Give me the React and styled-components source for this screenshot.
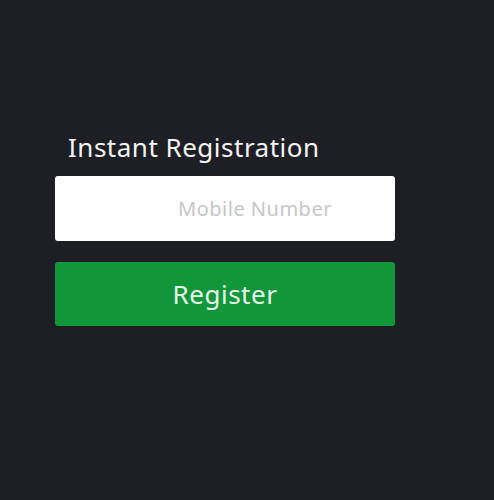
import styled, { createGlobalStyle } from "styled-components";

const Global = createGlobalStyle`
  html, body {
    margin: 0;
    background: #1e1f24;
    font-family: "Noto Sans", Lato, sans-serif;
  }
`;

const App = () => {
  return (
    <Page>
      <Global />
      <Form>
        <Title>Instant Registration</Title>
        <PhoneInput type="tel" placeholder="Mobile Number" />
        <RegisterButton type="button">Register</RegisterButton>
      </Form>
    </Page>
  );
};

export default App;

const Page = styled.div`
  min-height: 500px;
  padding: 128px 0 0 55px;
  box-sizing: border-box;
`;

const Form = styled.div`
  width: 340px;
  display: flex;
  flex-direction: column;
`;

const Title = styled.h2`
  margin: 0 0 10px 13px;
  font-size: 26px;
  font-weight: 400;
  letter-spacing: 0.5px;
  line-height: 38px;
  color: #f4f4f4;
`;

const PhoneInput = styled.input`
  height: 65px;
  box-sizing: border-box;
  border: 0;
  border-radius: 3px;
  background: #fff;
  padding: 0 0 0 60px;
  text-align: center;
  font-family: "Noto Sans", Lato, sans-serif;
  font-size: 20px;
  letter-spacing: 0.5px;
  outline: none;

  &::placeholder {
    color: #c6c6ca;
  }
`;

const RegisterButton = styled.button`
  margin-top: 21px;
  height: 64px;
  border: 0;
  border-radius: 3px;
  background: #12963a;
  color: #e8f6ea;
  font-family: "Noto Sans", Lato, sans-serif;
  font-size: 26px;
  letter-spacing: 0.5px;
  cursor: pointer;
`;
